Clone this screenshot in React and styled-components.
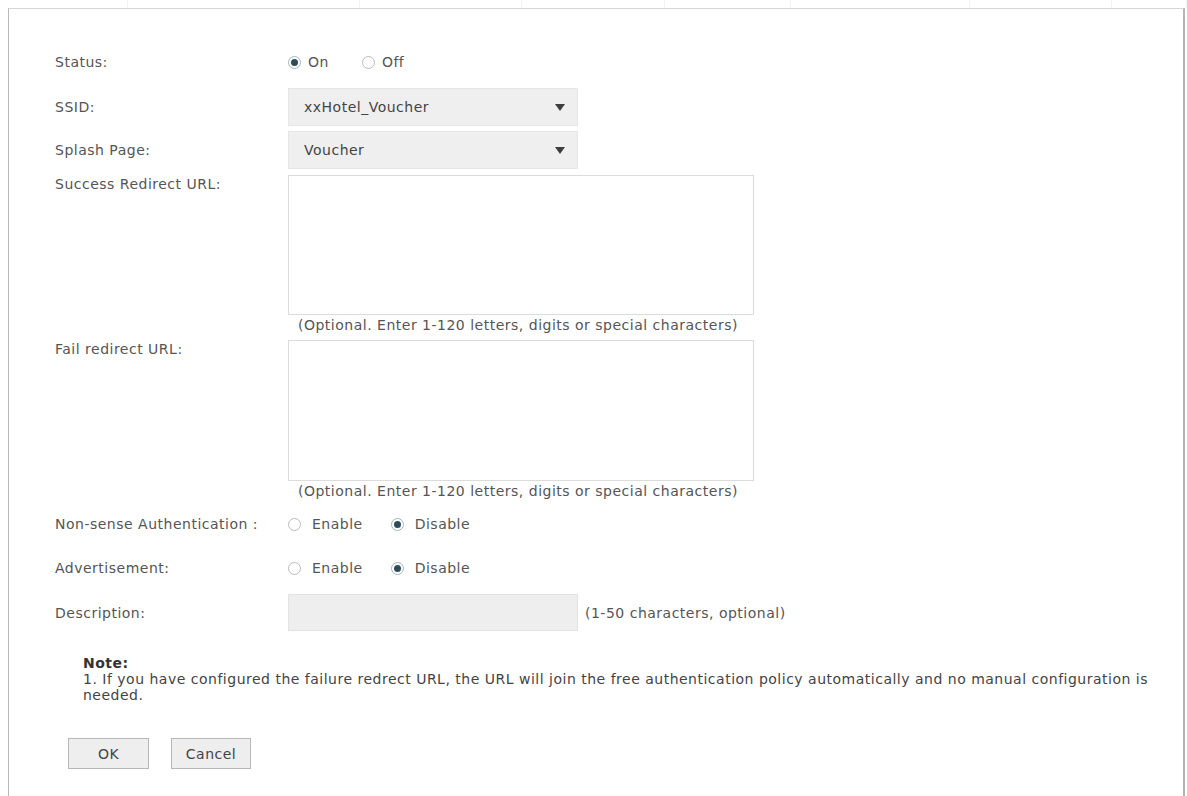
import React from "react";
import styled, { createGlobalStyle } from "styled-components";

const Global = createGlobalStyle`
  html, body { margin: 0; padding: 0; background: #fff; }
  body { font-family: "DejaVu Sans", Verdana, sans-serif; font-size: 14px; letter-spacing: 0.5px; color: #555; }
  * { box-sizing: border-box; }
`;

const Page = styled.div`
  width: 1187px;
  height: 796px;
  overflow: hidden;
  background: #fff;
`;

const TickRow = styled.div`
  display: grid;
  grid-template-columns: 120px 232px 162px 143px 126px 179px 142px 1fr;
  height: 8px;
  margin-left: 8px;
`;

const Tick = styled.div`
  border-right: 1px solid #f3f3f3;
`;

const Panel = styled.div`
  margin-left: 8px;
  width: 1177px;
  height: 788px;
  border-left: 1px solid #b9b9b9;
  border-top: 1px solid #d6d6d6;
  border-right: 2px solid #b5b5b5;
  display: flex;
  flex-direction: column;
  padding: 37px 0 0 46px;
`;

const Row = styled.div`
  display: grid;
  grid-template-columns: 233px 1fr;
  align-items: ${(p) => (p.$top ? "start" : "center")};
  height: ${(p) => p.$h}px;
  margin-top: ${(p) => p.$mt || 0}px;
`;

const Label = styled.div`
  color: #555;
  line-height: 18px;
  white-space: nowrap;
`;

const Controls = styled.div`
  display: flex;
  align-items: center;
  height: ${(p) => (p.$fill ? "100%" : "auto")};
`;

const RadioOption = styled.label`
  display: flex;
  align-items: center;
  gap: ${(p) => p.$gap}px;
  margin-right: ${(p) => p.$mr || 0}px;
  color: #555;
`;

const RadioCircle = styled.span`
  width: 13px;
  height: 13px;
  border-radius: 50%;
  border: 1px solid ${(p) => (p.$on ? "#a3b6be" : "#bcbcbc")};
  background: #fff;
  display: flex;
  align-items: center;
  justify-content: center;
  &::after {
    content: "";
    width: 7px;
    height: 7px;
    border-radius: 50%;
    background: #2f4d58;
    display: ${(p) => (p.$on ? "block" : "none")};
  }
`;

const Select = styled.div`
  width: 290px;
  height: 100%;
  background: #efefef;
  border: 1px solid #e6e6e6;
  display: flex;
  align-items: center;
  justify-content: space-between;
  padding: 0 12px 0 15px;
  color: #444;
`;

const Arrow = styled.span`
  width: 0;
  height: 0;
  border-left: 5px solid transparent;
  border-right: 5px solid transparent;
  border-top: 7px solid #3e3e3e;
`;

const TextArea = styled.div`
  width: 466px;
  height: 100%;
  border: 1px solid #dcdcdc;
  background: #fff;
`;

const Hint = styled.div`
  margin-left: 243px;
  height: ${(p) => p.$h}px;
  margin-top: ${(p) => p.$mt}px;
  line-height: ${(p) => p.$h}px;
  color: #555;
  white-space: nowrap;
`;

const InputBox = styled.div`
  width: 290px;
  height: 100%;
  background: #eeeeee;
  border: 1px solid #e2e2e2;
`;

const SideHint = styled.span`
  margin-left: 7px;
  color: #555;
`;

const Note = styled.div`
  margin: 24px 0 0 28px;
  line-height: 16px;
  color: #444;
  width: 1080px;
`;

const NoteTitle = styled.div`
  font-weight: bold;
  color: #333;
`;

const Buttons = styled.div`
  display: flex;
  gap: 22px;
  margin: 35px 0 0 13px;
`;

const Button = styled.button`
  width: ${(p) => p.$w}px;
  height: 31px;
  background: #eeeeee;
  border: 1px solid #b7b7b7;
  font-family: inherit;
  font-size: 14px;
  letter-spacing: 0.5px;
  color: #444;
  padding: 0;
`;

function Radio({ on, children, gap, mr }) {
  return (
    <RadioOption $gap={gap} $mr={mr}>
      <RadioCircle $on={on} />
      {children}
    </RadioOption>
  );
}

export default function App() {
  return (
    <Page>
      <Global />
      <TickRow>
        {Array.from({ length: 8 }).map((_, i) => (
          <Tick key={i} />
        ))}
      </TickRow>
      <Panel>
        <Row $h={32}>
          <Label>Status:</Label>
          <Controls>
            <Radio on gap={7} mr={33}>On</Radio>
            <Radio gap={7}>Off</Radio>
          </Controls>
        </Row>
        <Row $h={38} $mt={10}>
          <Label>SSID:</Label>
          <Select>
            xxHotel_Voucher
            <Arrow />
          </Select>
        </Row>
        <Row $h={38} $mt={5}>
          <Label>Splash Page:</Label>
          <Select>
            Voucher
            <Arrow />
          </Select>
        </Row>
        <Row $h={140} $mt={6} $top>
          <Label>Success Redirect URL:</Label>
          <TextArea />
        </Row>
        <Hint $h={16} $mt={2}>(Optional. Enter 1-120 letters, digits or special characters)</Hint>
        <Row $h={141} $mt={7} $top>
          <Label>Fail redirect URL:</Label>
          <TextArea />
        </Row>
        <Hint $h={16} $mt={2}>(Optional. Enter 1-120 letters, digits or special characters)</Hint>
        <Row $h={32} $mt={9}>
          <Label>Non-sense Authentication :</Label>
          <Controls>
            <Radio gap={11} mr={28}>Enable</Radio>
            <Radio on gap={11}>Disable</Radio>
          </Controls>
        </Row>
        <Row $h={32} $mt={12}>
          <Label>Advertisement:</Label>
          <Controls>
            <Radio gap={11} mr={28}>Enable</Radio>
            <Radio on gap={11}>Disable</Radio>
          </Controls>
        </Row>
        <Row $h={37} $mt={10}>
          <Label>Description:</Label>
          <Controls $fill>
            <InputBox />
            <SideHint>(1-50 characters, optional)</SideHint>
          </Controls>
        </Row>
        <Note>
          <NoteTitle>Note:</NoteTitle>
          1. If you have configured the failure redrect URL, the URL will join the free authentication policy automatically and no manual configuration is needed.
        </Note>
        <Buttons>
          <Button $w={81}>OK</Button>
          <Button $w={80}>Cancel</Button>
        </Buttons>
      </Panel>
    </Page>
  );
}
